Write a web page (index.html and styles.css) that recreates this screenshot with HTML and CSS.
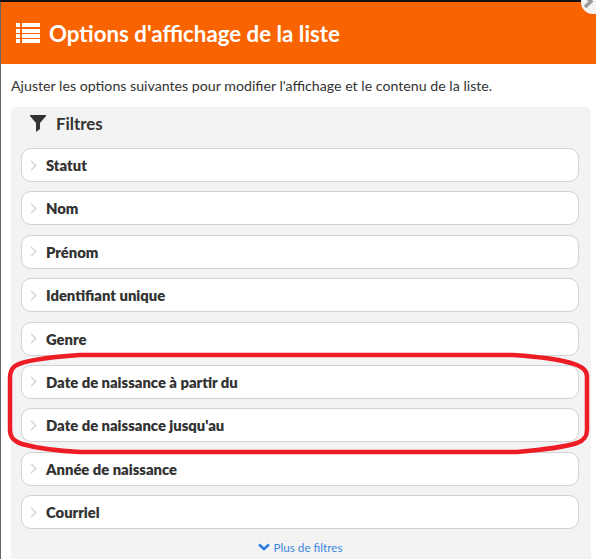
FILE: index.html

```html
<!DOCTYPE html>
<html lang="fr">
<head>
    <meta charset="UTF-8">
    <title>Options d'affichage de la liste</title>
    <link rel="stylesheet" href="styles.css">
</head>
<body>

<div class="modal">
    <div class="modal-header">
        <svg class="header-icon" width="24" height="22" viewBox="0 0 24 22">
            <path d="M0 1h4v4H0zM6 1h18v4H6zM0 7h4v4H0zM6 7h18v4H6zM0 12h4v4H0zM6 12h18v4H6zM0 17h4v4H0zM6 17h18v4H6z" fill="#fff"/>
        </svg>
        <h1>Options d'affichage de la liste</h1>
    </div>

    <p class="intro">Ajuster les options suivantes pour modifier l'affichage et le contenu de la liste.</p>

    <div class="filters">
        <div class="filters-title">
            <svg width="16" height="17" viewBox="0 0 16 17">
                <path d="M0 0h16v1L10 8v6l-4 3V8L0 1z" fill="#333"/>
            </svg>
            <h2>Filtres</h2>
        </div>

        <div class="filter-list">
            <div class="filter-row"><span class="chevron"></span>Statut</div>
            <div class="filter-row"><span class="chevron"></span>Nom</div>
            <div class="filter-row"><span class="chevron"></span>Prénom</div>
            <div class="filter-row"><span class="chevron"></span>Identifiant unique</div>
            <div class="filter-row"><span class="chevron"></span>Genre</div>
            <div class="filter-row"><span class="chevron"></span>Date de naissance à partir du</div>
            <div class="filter-row"><span class="chevron"></span>Date de naissance jusqu'au</div>
            <div class="filter-row"><span class="chevron"></span>Année de naissance</div>
            <div class="filter-row"><span class="chevron"></span>Courriel</div>
        </div>

        <a class="more-filters" href="#">
            <svg width="12" height="8" viewBox="0 0 12 8">
                <path d="M1 1.500L6 6l5-4.500" fill="none" stroke="#2e7fe0" stroke-width="2.600"/>
            </svg>
            Plus de filtres
        </a>
    </div>
</div>

<div class="close-btn">
    <svg width="10" height="14" viewBox="0 0 10 14">
        <path d="M1 1l6 5.500L1 12" fill="none" stroke="#999" stroke-width="3.500"/>
    </svg>
</div>

<!-- annotation drawn over the screenshot -->
<svg class="annotation" width="596" height="559" viewBox="0 0 596 559">
    <path d="M80 355C50 357 24 360 15 366C11 369 10 372 10 378V430C10 437 13 441 22 444C40 449 60 451 80 452H517C540 450 562 448 577 443C585 440 587 436 587 430V376C587 371 584 368 577 365C560 359 540 357 513 355Z" fill="none" stroke="#ee1c25" stroke-width="4.500"/>
</svg>

</body>
</html>
```

FILE: styles.css

```css
html, body {
    margin: 0;
    padding: 0;
    height: 559px;
    overflow: hidden;
}
body {
    font-family: Lato, sans-serif;
    background-color: #666;
    color: #333;
    padding: 2px 0 0 1px;
    box-sizing: border-box;
    background-image: linear-gradient(#111 2px, transparent 2px);
    position: relative;
}
.modal {
    background: white;
    height: 557px;
}
.modal-header {
    background: #f96400;
    height: 62px;
    display: flex;
    align-items: center;
    padding-left: 15px;
    gap: 9px;
}
.modal-header h1 {
    margin: 0;
    font-size: 22.300px;
    font-weight: 700;
    color: white;
}
.header-icon {
    flex: none;
}
.intro {
    margin: 0;
    padding: 13px 0 0 10px;
    height: 30px;
    font-size: 14.200px;
    line-height: 18px;
}
.filters {
    background: #f3f3f3;
    margin: 0 5px 0 10px;
    height: 470px;
    border-radius: 5px;
    padding: 0 12px 0 10px;
}
.filters-title {
    display: flex;
    align-items: center;
    gap: 10px;
    height: 33px;
    padding: 0 0 8px 9px;
}
.filters-title h2 {
    margin: 0;
    font-size: 16.800px;
    font-weight: 700;
}
.filter-list {
    display: flex;
    flex-direction: column;
    gap: 9.400px;
}
.filter-row {
    background: white;
    border: 1px solid #d2d2d2;
    border-radius: 10px;
    height: 32px;
    display: flex;
    align-items: center;
    font-size: 14.800px;
    font-weight: 800;
    padding-left: 6px;
}
.chevron {
    width: 7px;
    height: 7px;
    box-sizing: border-box;
    border-top: 1.500px solid #c8c8c8;
    border-right: 1.500px solid #c8c8c8;
    transform: rotate(45deg);
    margin-right: 11px;
}
.more-filters {
    display: flex;
    justify-content: center;
    align-items: center;
    gap: 4px;
    margin-top: 11px;
    font-size: 11.700px;
    color: #3b87e0;
    text-decoration: none;
}
.close-btn {
    position: absolute;
    top: -10px;
    right: -9px;
    width: 24px;
    height: 24px;
    border-radius: 50%;
    background: #f4f4f4;
    display: flex;
    align-items: center;
    padding-left: 3px;
    box-sizing: border-box;
}
.annotation {
    position: absolute;
    top: 0;
    left: 0;
}
```
